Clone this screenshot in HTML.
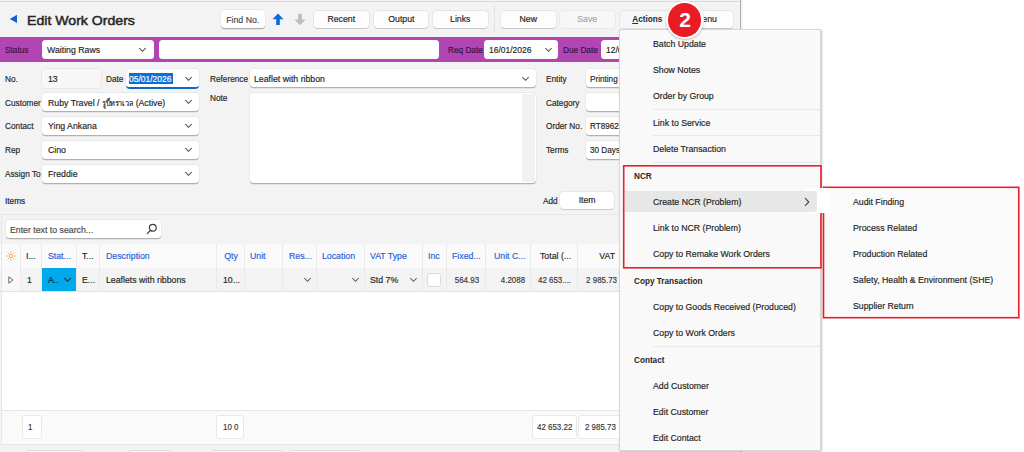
<!DOCTYPE html><html><head><meta charset="utf-8"><title>Edit Work Orders</title><style>
*{box-sizing:border-box;margin:0;padding:0}
html,body{width:1024px;height:452px;overflow:hidden;background:#fff}
body{font-family:"Liberation Sans","Noto Sans CJK SC",sans-serif;font-size:9.5px;color:#262626;position:relative}
.a{position:absolute}
.t{position:absolute;white-space:nowrap;line-height:12px;height:12px;-webkit-text-stroke:.18px;transform:scaleX(.92);transform-origin:0 50%}
.t.b{font-weight:700;transform:scaleX(.86);-webkit-text-stroke:0}
.t.n{transform:scaleX(.835);color:#3a3a3a}
.t.l{transform:scaleX(.868)}
.t.d{transform:scaleX(.893)}
.t.r{transform-origin:100% 50%;text-align:right}
.t.c{transform-origin:50% 50%;text-align:center}
.btn{position:absolute;background:#fdfdfd;border-radius:3.5px;box-shadow:0 0 0 .7px rgba(0,0,0,.07),0 1px .5px rgba(0,0,0,.13)}
.inp{position:absolute;background:#fff;border-radius:3.5px;box-shadow:0 0 0 .7px rgba(0,0,0,.06),0 1.3px .6px rgba(0,0,0,.24)}
.chev{position:absolute;width:9px;height:6px}
.bl{color:#2b5fd9}
.sep{position:absolute;background:#e9e9e9;height:1px}
</style></head><body>
<div class="a" style="left:0;top:0;width:743px;height:452px;background:#f2f2f2"></div>
<div class="a" style="left:0;top:1px;width:741px;height:451px;background:#f3f3f3;border-top:1px solid #dadada"></div>
<div class="a" style="left:740px;top:0;width:1px;height:452px;background:#adadad"></div>
<svg class="a" style="left:9px;top:14px" width="9" height="10" viewBox="0 0 9 10"><path d="M8 0.8 L8 9 L0.8 4.9 Z" fill="#0b63ce"/></svg>
<div class="a" style="left:27px;top:9.5px;font-size:13.5px;line-height:22px;height:22px;font-weight:400;-webkit-text-stroke:.5px #262626;color:#262626;white-space:nowrap;transform:scaleX(1.045);transform-origin:0 50%">Edit Work Orders</div>
<div class="btn" style="left:221.3px;top:10.3px;width:43.5px;height:18px;background:#fff;box-shadow:0 0 0 .7px rgba(0,0,0,.06),0 1.3px .6px rgba(0,0,0,.26)"></div>
<div class="t c " style="left:211.3px;width:63.5px;top:14px;color:#4a4a4a">Find No.</div>
<svg class="a" style="left:272px;top:13px" width="12" height="13" viewBox="0 0 12 13"><path d="M6 0.5 L11.5 6.3 L7.8 6.3 L7.8 12 L4.2 12 L4.2 6.3 L0.5 6.3 Z" fill="#0b6bd6"/></svg>
<svg class="a" style="left:294px;top:13px" width="12" height="13" viewBox="0 0 12 13"><path d="M6 12.3 L11.5 6.5 L7.8 6.5 L7.8 0.8 L4.2 0.8 L4.2 6.5 L0.5 6.5 Z" fill="#bdbdbd"/></svg>
<div class="btn" style="left:314px;top:10.8px;width:54.5px;height:17.2px;"></div>
<div class="t c " style="left:304.0px;width:74.5px;top:13px;">Recent</div>
<div class="btn" style="left:373.5px;top:10.8px;width:54.7px;height:17.2px;"></div>
<div class="t c " style="left:363.5px;width:74.7px;top:13px;">Output</div>
<div class="btn" style="left:433px;top:10.8px;width:54.5px;height:17.2px;"></div>
<div class="t c " style="left:423.0px;width:74.5px;top:13px;">Links</div>
<div class="a" style="left:494px;top:6px;width:1px;height:27px;background:#e2e2e2"></div>
<div class="btn" style="left:501px;top:10.8px;width:54.5px;height:17.2px;"></div>
<div class="t c " style="left:491.0px;width:74.5px;top:13px;">New</div>
<div class="btn" style="left:560px;top:10.8px;width:54.5px;height:17.2px;background:#f7f7f7;box-shadow:0 0 0 .7px rgba(0,0,0,.05)"></div>
<div class="t c " style="left:550.0px;width:74.5px;top:13px;color:#a8a8a8">Save</div>
<div class="btn" style="left:620px;top:10.8px;width:54.5px;height:17.2px;background:#f6f6f6;box-shadow:0 0 0 .7px rgba(0,0,0,.07)"></div>
<div class="t c b" style="left:610.0px;width:74.5px;top:13px;"><u>A</u>ctions</div>
<div class="btn" style="left:679px;top:10.8px;width:54px;height:17.2px;"></div>
<div class="t c " style="left:669.0px;width:74px;top:13px;">Menu</div>
<div class="a" style="left:0;top:37px;width:741px;height:25px;background:#b146b3"></div>
<div class="t l" style="left:5px;top:44px;color:#3b1248">Status</div>
<div class="inp" style="left:42px;top:39.5px;width:112px;height:19.5px;box-shadow:none"></div>
<div class="t " style="left:47px;top:44px;">Waiting Raws</div>
<svg class="chev" style="left:138px;top:47px" viewBox="0 0 9 6"><path d="M1.3 1 L4.5 4.3 L7.7 1" fill="none" stroke="#444" stroke-width="1.05"/></svg>
<div class="inp" style="left:159px;top:39.5px;width:280px;height:19.5px;box-shadow:none"></div>
<div class="t l" style="left:447.5px;top:44px;color:#3b1248">Req Date</div>
<div class="inp" style="left:484px;top:39.5px;width:74px;height:19.5px;box-shadow:none"></div>
<div class="t d" style="left:488.7px;top:44px;">16/01/2026</div>
<svg class="chev" style="left:543.5px;top:47px" viewBox="0 0 9 6"><path d="M1.3 1 L4.5 4.3 L7.7 1" fill="none" stroke="#444" stroke-width="1.05"/></svg>
<div class="t l" style="left:563px;top:44px;color:#3b1248">Due Date</div>
<div class="inp" style="left:601px;top:39.5px;width:74px;height:19.5px;box-shadow:none"></div>
<div class="t d" style="left:605.5px;top:44px;">12/01/2026</div>
<div class="t l" style="left:5px;top:73px;">No.</div>
<div class="inp" style="left:42.4px;top:69px;width:59px;height:18.8px;background:#f7f7f7;box-shadow:0 0 0 .8px rgba(0,0,0,.06)"></div>
<div class="t " style="left:47.5px;top:73px;">13</div>
<div class="t l" style="left:106px;top:73px;">Date</div>
<div class="inp" style="left:126px;top:69px;width:72.5px;height:19px;box-shadow:0 0 0 .7px rgba(0,0,0,.06);overflow:hidden"></div>
<div class="a" style="left:126px;top:84px;width:72.5px;height:4.5px;border-radius:0 0 4px 4px;border-bottom:2px solid #0a6ac4;transform:translateY(.1px)"></div>
<div class="a" style="left:129.3px;top:72.5px;width:43.7px;height:11.5px;background:#0a6fd6"></div>
<div class="t d" style="left:129.2px;top:73px;color:#fff">05/01/2026</div>
<svg class="chev" style="left:184.2px;top:75.6px" viewBox="0 0 9 6"><path d="M1.3 1 L4.5 4.3 L7.7 1" fill="none" stroke="#444" stroke-width="1.05"/></svg>
<div class="t l" style="left:5px;top:97px;">Customer</div>
<div class="inp" style="left:42.4px;top:92.8px;width:156.2px;height:18.2px;"></div>
<div class="t " style="left:47.5px;top:97px;">Ruby Travel / <span style="font-size:8px;display:inline-block;width:34px;height:12px;line-height:13.4px;overflow:hidden;vertical-align:top;white-space:nowrap">รูบี้ทราเวล</span> (Active)</div>
<svg class="chev" style="left:184.4px;top:98.8px" viewBox="0 0 9 6"><path d="M1.3 1 L4.5 4.3 L7.7 1" fill="none" stroke="#444" stroke-width="1.05"/></svg>
<div class="t l" style="left:5px;top:120px;">Contact</div>
<div class="inp" style="left:42.4px;top:116.7px;width:156.2px;height:18.2px;"></div>
<div class="t " style="left:47.5px;top:120px;">Ying Ankana</div>
<svg class="chev" style="left:184.4px;top:122.7px" viewBox="0 0 9 6"><path d="M1.3 1 L4.5 4.3 L7.7 1" fill="none" stroke="#444" stroke-width="1.05"/></svg>
<div class="t l" style="left:5px;top:144px;">Rep</div>
<div class="inp" style="left:42.4px;top:140.6px;width:156.2px;height:18.2px;"></div>
<div class="t " style="left:47.5px;top:144px;">Cino</div>
<svg class="chev" style="left:184.4px;top:146.6px" viewBox="0 0 9 6"><path d="M1.3 1 L4.5 4.3 L7.7 1" fill="none" stroke="#444" stroke-width="1.05"/></svg>
<div class="t l" style="left:5px;top:168px;">Assign To</div>
<div class="inp" style="left:42.4px;top:164.5px;width:156.2px;height:18.2px;"></div>
<div class="t " style="left:47.5px;top:168px;">Freddie</div>
<svg class="chev" style="left:184.4px;top:170.5px" viewBox="0 0 9 6"><path d="M1.3 1 L4.5 4.3 L7.7 1" fill="none" stroke="#444" stroke-width="1.05"/></svg>
<div class="t l" style="left:209.5px;top:73px;">Reference</div>
<div class="inp" style="left:250px;top:69px;width:285.5px;height:18.2px;"></div>
<div class="t " style="left:254px;top:73px;">Leaflet with ribbon</div>
<svg class="chev" style="left:521px;top:76px" viewBox="0 0 9 6"><path d="M1.3 1 L4.5 4.3 L7.7 1" fill="none" stroke="#444" stroke-width="1.05"/></svg>
<div class="t l" style="left:209.5px;top:92px;">Note</div>
<div class="inp" style="left:250px;top:93px;width:285.5px;height:89.5px;"></div>
<div class="a" style="left:522px;top:94px;width:12.5px;height:88px;background:#f1f1f1"></div>
<div class="t l" style="left:546.4px;top:73px;">Entity</div>
<div class="inp" style="left:586px;top:69px;width:120px;height:18.2px;"></div>
<div class="t " style="left:590px;top:73px;transform:scaleX(.86)">Printing</div>
<div class="t l" style="left:546.4px;top:97px;">Category</div>
<div class="inp" style="left:586px;top:92.8px;width:120px;height:18.2px;"></div>
<div class="t " style="left:590px;top:97px;transform:scaleX(.86)"></div>
<div class="t l" style="left:546.4px;top:120px;">Order No.</div>
<div class="inp" style="left:586px;top:116.7px;width:120px;height:18.2px;"></div>
<div class="t " style="left:590px;top:120px;transform:scaleX(.86)">RT89622</div>
<div class="t l" style="left:546.4px;top:144px;">Terms</div>
<div class="inp" style="left:586px;top:140.6px;width:120px;height:18.2px;"></div>
<div class="t " style="left:590px;top:144px;transform:scaleX(.86)">30 Days</div>
<div class="t l" style="left:5px;top:195px;color:#222">Items</div>
<div class="t l" style="left:542.5px;top:195px;">Add</div>
<div class="btn" style="left:560px;top:192px;width:54.3px;height:16.8px;background:#fff"></div>
<div class="t c " style="left:550.0px;width:74.3px;top:194px;">Item</div>
<div class="a" style="left:0;top:214px;width:741px;height:1px;background:#e7e7e7"></div>
<div class="inp" style="left:5.5px;top:220px;width:155px;height:18.3px;"></div>
<div class="t " style="left:9.5px;top:224px;color:#4a4a4a">Enter text to search...</div>
<svg class="a" style="left:145.5px;top:223px" width="12" height="12" viewBox="0 0 12 12"><circle cx="6.8" cy="4.8" r="3.4" fill="none" stroke="#3c3c3c" stroke-width="1.2"/><path d="M4.4 7.4 L1 10.9" stroke="#3c3c3c" stroke-width="1.3"/></svg>
<div class="a" style="left:0;top:244px;width:741px;height:24px;background:#fafafa"></div>
<div class="a" style="left:0;top:268px;width:741px;height:23.5px;background:#f3f3f3;border-bottom:1px solid #e2e2e2"></div>
<div class="a" style="left:1px;top:268px;width:19px;height:23px;background:#f8f8f8"></div>
<div class="a" style="left:1px;top:291.5px;width:740px;height:118px;background:#fff"></div>
<div class="a" style="left:1px;top:409.5px;width:740px;height:35px;background:#fafafa;border-top:1px solid #e6e6e6;border-bottom:1px solid #e6e6e6"></div>
<div class="a" style="left:0;top:444.5px;width:740px;height:8px;background:#f2f2f2"></div>
<div class="a" style="left:0.5px;top:215px;width:1px;height:230px;background:#e8e8e8"></div>
<div class="a" style="left:20px;top:244px;width:1px;height:47.5px;background:#e9e9e9"></div>
<div class="a" style="left:41px;top:244px;width:1px;height:47.5px;background:#e9e9e9"></div>
<div class="a" style="left:76px;top:244px;width:1px;height:47.5px;background:#e9e9e9"></div>
<div class="a" style="left:99px;top:244px;width:1px;height:47.5px;background:#e9e9e9"></div>
<div class="a" style="left:216px;top:244px;width:1px;height:47.5px;background:#e9e9e9"></div>
<div class="a" style="left:244px;top:244px;width:1px;height:47.5px;background:#e9e9e9"></div>
<div class="a" style="left:282px;top:244px;width:1px;height:47.5px;background:#e9e9e9"></div>
<div class="a" style="left:316px;top:244px;width:1px;height:47.5px;background:#e9e9e9"></div>
<div class="a" style="left:364px;top:244px;width:1px;height:47.5px;background:#e9e9e9"></div>
<div class="a" style="left:422px;top:244px;width:1px;height:47.5px;background:#e9e9e9"></div>
<div class="a" style="left:446px;top:244px;width:1px;height:47.5px;background:#e9e9e9"></div>
<div class="a" style="left:485px;top:244px;width:1px;height:47.5px;background:#e9e9e9"></div>
<div class="a" style="left:530px;top:244px;width:1px;height:47.5px;background:#e9e9e9"></div>
<div class="a" style="left:577px;top:244px;width:1px;height:47.5px;background:#e9e9e9"></div>
<div class="t " style="left:26px;top:250px;">I...</div>
<div class="t bl" style="left:47.7px;top:250px;">Stat...</div>
<div class="t " style="left:82px;top:250px;">T...</div>
<div class="t bl" style="left:105.5px;top:250px;">Description</div>
<div class="t r bl" style="right:786px;top:250px;">Qty</div>
<div class="t bl" style="left:249.5px;top:250px;">Unit</div>
<div class="t bl" style="left:288.5px;top:250px;">Res...</div>
<div class="t bl" style="left:321.5px;top:250px;">Location</div>
<div class="t bl" style="left:370px;top:250px;">VAT Type</div>
<div class="t bl" style="left:428px;top:250px;">Inc</div>
<div class="t bl" style="left:451.5px;top:250px;">Fixed...</div>
<div class="t bl" style="left:493.5px;top:250px;">Unit C...</div>
<div class="t " style="left:539.5px;top:250px;">Total (...</div>
<div class="t r " style="right:408.5px;top:250px;">VAT</div>
<svg class="a" style="left:5.5px;top:251px" width="10" height="10" viewBox="0 0 10 10"><g stroke="#f39a3c" stroke-width="0.9" fill="none"><circle cx="5" cy="5" r="1.8"/><path d="M5 0.3v1.6M5 8.1v1.6M0.3 5h1.6M8.1 5h1.6M1.7 1.7l1.1 1.1M7.2 7.2l1.1 1.1M1.7 8.3l1.1-1.1M7.2 2.8l1.1-1.1"/></g></svg>
<svg class="a" style="left:8.3px;top:276.3px" width="6" height="8" viewBox="0 0 6 8"><path d="M0.8 0.8 L5 4 L0.8 7.2 Z" fill="none" stroke="#5a5a5a" stroke-width="0.9"/></svg>
<div class="t " style="left:26.5px;top:274px;">1</div>
<div class="a" style="left:42px;top:268px;width:34px;height:23px;background:#00a8ec"></div>
<div class="t " style="left:48px;top:274px;color:#10222c">A..</div>
<svg class="chev" style="left:62.5px;top:277px" viewBox="0 0 9 6"><path d="M1.3 1 L4.5 4.3 L7.7 1" fill="none" stroke="#10222c" stroke-width="1.05"/></svg>
<div class="t " style="left:82.3px;top:274px;">E...</div>
<div class="t " style="left:105.5px;top:274px;">Leaflets with ribbons</div>
<div class="t " style="left:223px;top:274px;">10...</div>
<svg class="chev" style="left:302.5px;top:277px" viewBox="0 0 9 6"><path d="M1.3 1 L4.5 4.3 L7.7 1" fill="none" stroke="#5a5a5a" stroke-width="1.05"/></svg>
<svg class="chev" style="left:350.5px;top:277px" viewBox="0 0 9 6"><path d="M1.3 1 L4.5 4.3 L7.7 1" fill="none" stroke="#5a5a5a" stroke-width="1.05"/></svg>
<div class="t " style="left:370px;top:274px;">Std 7%</div>
<svg class="chev" style="left:408.5px;top:277px" viewBox="0 0 9 6"><path d="M1.3 1 L4.5 4.3 L7.7 1" fill="none" stroke="#5a5a5a" stroke-width="1.05"/></svg>
<div class="a" style="left:427px;top:273px;width:14px;height:14px;background:#fff;border:1px solid #dcdcdc;border-radius:3px"></div>
<div class="t r n" style="right:544.5px;top:274px;">564.93</div>
<div class="t r n" style="right:498.70000000000005px;top:274px;">4.2088</div>
<div class="t n" style="left:537.5px;top:274px;">42 653....</div>
<div class="t r n" style="right:407.5px;top:274px;">2 985.73</div>
<div class="a" style="left:22px;top:415px;width:19.5px;height:23.5px;background:#fff;border:1px solid #e8e8e8;border-radius:3px;overflow:hidden"><div class="t n" style="left:5px;top:5px">1</div></div>
<div class="a" style="left:216px;top:415px;width:28px;height:23.5px;background:#fff;border:1px solid #e8e8e8;border-radius:3px;overflow:hidden"><div class="t n" style="left:6px;top:5px">10 0</div></div>
<div class="a" style="left:531.5px;top:415px;width:45px;height:23.5px;background:#fff;border:1px solid #e8e8e8;border-radius:3px;overflow:hidden"><div class="t n" style="left:4.5px;top:5px">42 653.22</div></div>
<div class="a" style="left:578px;top:415px;width:48px;height:23.5px;background:#fff;border:1px solid #e8e8e8;border-radius:3px;overflow:hidden"><div class="t n" style="left:6px;top:5px">2 985.73</div></div>
<div class="a" style="left:26.25px;top:450px;width:57px;height:6px;background:#fbfbfb;border:1px solid #dcdcdc;border-radius:3px"></div>
<div class="a" style="left:127.5px;top:450px;width:43.5px;height:6px;background:#fbfbfb;border:1px solid #dcdcdc;border-radius:3px"></div>
<div class="a" style="left:211.25px;top:450px;width:72px;height:6px;background:#fbfbfb;border:1px solid #dcdcdc;border-radius:3px"></div>
<div class="a" style="left:289.25px;top:450px;width:72px;height:6px;background:#fbfbfb;border:1px solid #dcdcdc;border-radius:3px"></div>
<div class="a" style="left:619px;top:29px;width:202px;height:422px;background:#f9f9f9;border:1px solid #d6d6d6;box-shadow:1px 1px 2px rgba(0,0,0,.22)"></div>
<div class="a" style="left:823px;top:187px;width:196px;height:131px;background:#fafafa"></div>
<svg class="a" style="left:0;top:0" width="1024" height="452" viewBox="0 0 1024 452"><g fill="none" stroke="#e91f2b" stroke-width="1.6"><rect x="623.7" y="165.8" width="197.3" height="102"/><rect x="823.5" y="187.3" width="195.3" height="130.4"/></g></svg>
<div class="a" style="left:805px;top:188.3px;width:25px;height:24.4px;background:#fff"></div>
<div class="a" style="left:625px;top:191px;width:192px;height:21.3px;background:#e7e7e7;border-radius:0 3px 3px 0"></div>
<div class="t " style="left:653px;top:38px;">Batch Update</div>
<div class="t " style="left:653px;top:64px;">Show Notes</div>
<div class="t " style="left:653px;top:90px;">Order by Group</div>
<div class="t " style="left:653px;top:117px;">Link to Service</div>
<div class="t " style="left:653px;top:143px;">Delete Transaction</div>
<div class="t b" style="left:634px;top:170px;">NCR</div>
<div class="t " style="left:653px;top:196px;">Create NCR (Problem)</div>
<div class="t " style="left:653px;top:222px;">Link to NCR (Problem)</div>
<div class="t " style="left:653px;top:248px;">Copy to Remake Work Orders</div>
<div class="t b" style="left:634px;top:275px;">Copy Transaction</div>
<div class="t " style="left:653px;top:301px;">Copy to Goods Received (Produced)</div>
<div class="t " style="left:653px;top:327px;">Copy to Work Orders</div>
<div class="t b" style="left:634px;top:354px;">Contact</div>
<div class="t " style="left:653px;top:380px;">Add Customer</div>
<div class="t " style="left:653px;top:406px;">Edit Customer</div>
<div class="t " style="left:653px;top:432px;">Edit Contact</div>
<div class="sep" style="left:653px;top:108.5px;width:167px"></div>
<div class="sep" style="left:653px;top:135.3px;width:167px"></div>
<div class="sep" style="left:653px;top:162px;width:167px"></div>
<div class="sep" style="left:653px;top:346px;width:167px"></div>
<svg class="a" style="left:803.5px;top:196.5px" width="6" height="10" viewBox="0 0 6 10"><path d="M1 1.2 L4.8 5 L1 8.8" fill="none" stroke="#444" stroke-width="1.1"/></svg>
<div class="t " style="left:852.5px;top:196px;">Audit Finding</div>
<div class="t " style="left:852.5px;top:222px;">Process Related</div>
<div class="t " style="left:852.5px;top:248px;">Production Related</div>
<div class="t " style="left:852.5px;top:274px;">Safety, Health &amp; Environment (SHE)</div>
<div class="t " style="left:852.5px;top:300px;">Supplier Return</div>
<div class="a" style="left:665.7px;top:1px;width:38px;height:38px;border-radius:50%;background:#fff;box-shadow:0 1px 2px rgba(0,0,0,.25)"></div>
<div class="a" style="left:668px;top:3.3px;width:33.4px;height:33.4px;border-radius:50%;background:#e91c24"></div>
<div class="a" style="left:665px;top:8px;width:40px;height:24px;line-height:24px;text-align:center;color:#fff;font-weight:700;font-size:21px">2</div>
</body></html>
